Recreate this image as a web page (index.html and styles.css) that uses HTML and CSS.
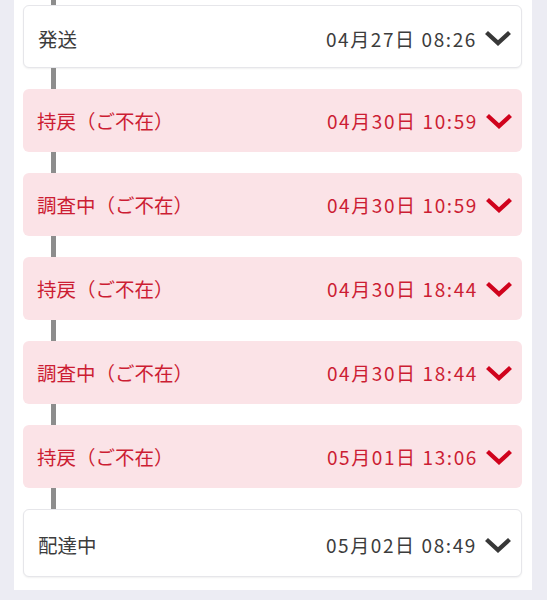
FILE: index.html
```html
<!DOCTYPE html>
<html lang="ja">
<head>
<meta charset="utf-8">
<link rel="stylesheet" href="styles.css">
</head>
<body>
<div class="panel">
  <div class="line line-top"></div>
  <div class="card plain">
    <span class="label">発送</span>
    <span class="right"><span class="date">04月27日 08:26</span><svg class="chev" viewBox="0 0 28 16"><polyline points="2.5,2.5 14,13 25.5,2.5"/></svg></span>
  </div>
  <div class="line"></div>
  <div class="card alert">
    <span class="label">持戻（ご不在）</span>
    <span class="right"><span class="date">04月30日 10:59</span><svg class="chev" viewBox="0 0 28 16"><polyline points="2.5,2.5 14,13 25.5,2.5"/></svg></span>
  </div>
  <div class="line"></div>
  <div class="card alert">
    <span class="label">調査中（ご不在）</span>
    <span class="right"><span class="date">04月30日 10:59</span><svg class="chev" viewBox="0 0 28 16"><polyline points="2.5,2.5 14,13 25.5,2.5"/></svg></span>
  </div>
  <div class="line"></div>
  <div class="card alert">
    <span class="label">持戻（ご不在）</span>
    <span class="right"><span class="date">04月30日 18:44</span><svg class="chev" viewBox="0 0 28 16"><polyline points="2.5,2.5 14,13 25.5,2.5"/></svg></span>
  </div>
  <div class="line"></div>
  <div class="card alert">
    <span class="label">調査中（ご不在）</span>
    <span class="right"><span class="date">04月30日 18:44</span><svg class="chev" viewBox="0 0 28 16"><polyline points="2.5,2.5 14,13 25.5,2.5"/></svg></span>
  </div>
  <div class="line"></div>
  <div class="card alert">
    <span class="label">持戻（ご不在）</span>
    <span class="right"><span class="date">05月01日 13:06</span><svg class="chev" viewBox="0 0 28 16"><polyline points="2.5,2.5 14,13 25.5,2.5"/></svg></span>
  </div>
  <div class="line"></div>
  <div class="card plain last">
    <span class="label">配達中</span>
    <span class="right"><span class="date">05月02日 08:49</span><svg class="chev" viewBox="0 0 28 16"><polyline points="2.5,2.5 14,13 25.5,2.5"/></svg></span>
  </div>
</div>
</body>
</html>
```
FILE: styles.css
```css
html, body {
  margin: 0;
  padding: 0;
  background: #ececf3;
}
body {
  font-family: "Noto Sans CJK JP", "Noto Sans", sans-serif;
  width: 547px;
  height: 600px;
  overflow: hidden;
}
.panel {
  margin: 0 15px 0 14px;
  background: #ffffff;
  padding: 0 10px 13px 9px;
  display: flex;
  flex-direction: column;
}
.line {
  width: 5px;
  height: 21px;
  margin-left: 28px;
  background: #8d8d8d;
}
.line-top {
  height: 5px;
}
.card {
  box-sizing: border-box;
  height: 63px;
  border-radius: 6px;
  display: flex;
  align-items: center;
  justify-content: space-between;
  padding: 0 9px 0 14px;
}
.label {
  font-size: 19.5px;
}
.card.plain {
  background: #ffffff;
  border: 1px solid #e6e6ea;
  box-shadow: 0 1px 2px rgba(0,0,0,0.06);
  color: #3c3c3c;
  padding-top: 3px;
}
.card.last {
  height: 68px;
}
.card.alert {
  background: #fbe3e7;
  color: #cc1d33;
}
.right {
  display: flex;
  align-items: center;
  gap: 7px;
}
.date {
  font-size: 19px;
  letter-spacing: 1.6px;
}
.chev {
  width: 28px;
  height: 16px;
  fill: none;
  stroke-width: 4.4;
  stroke-linecap: butt;
  stroke-linejoin: miter;
}
.plain .chev {
  stroke: #383838;
}
.alert .chev {
  stroke: #d0031d;
}
```
